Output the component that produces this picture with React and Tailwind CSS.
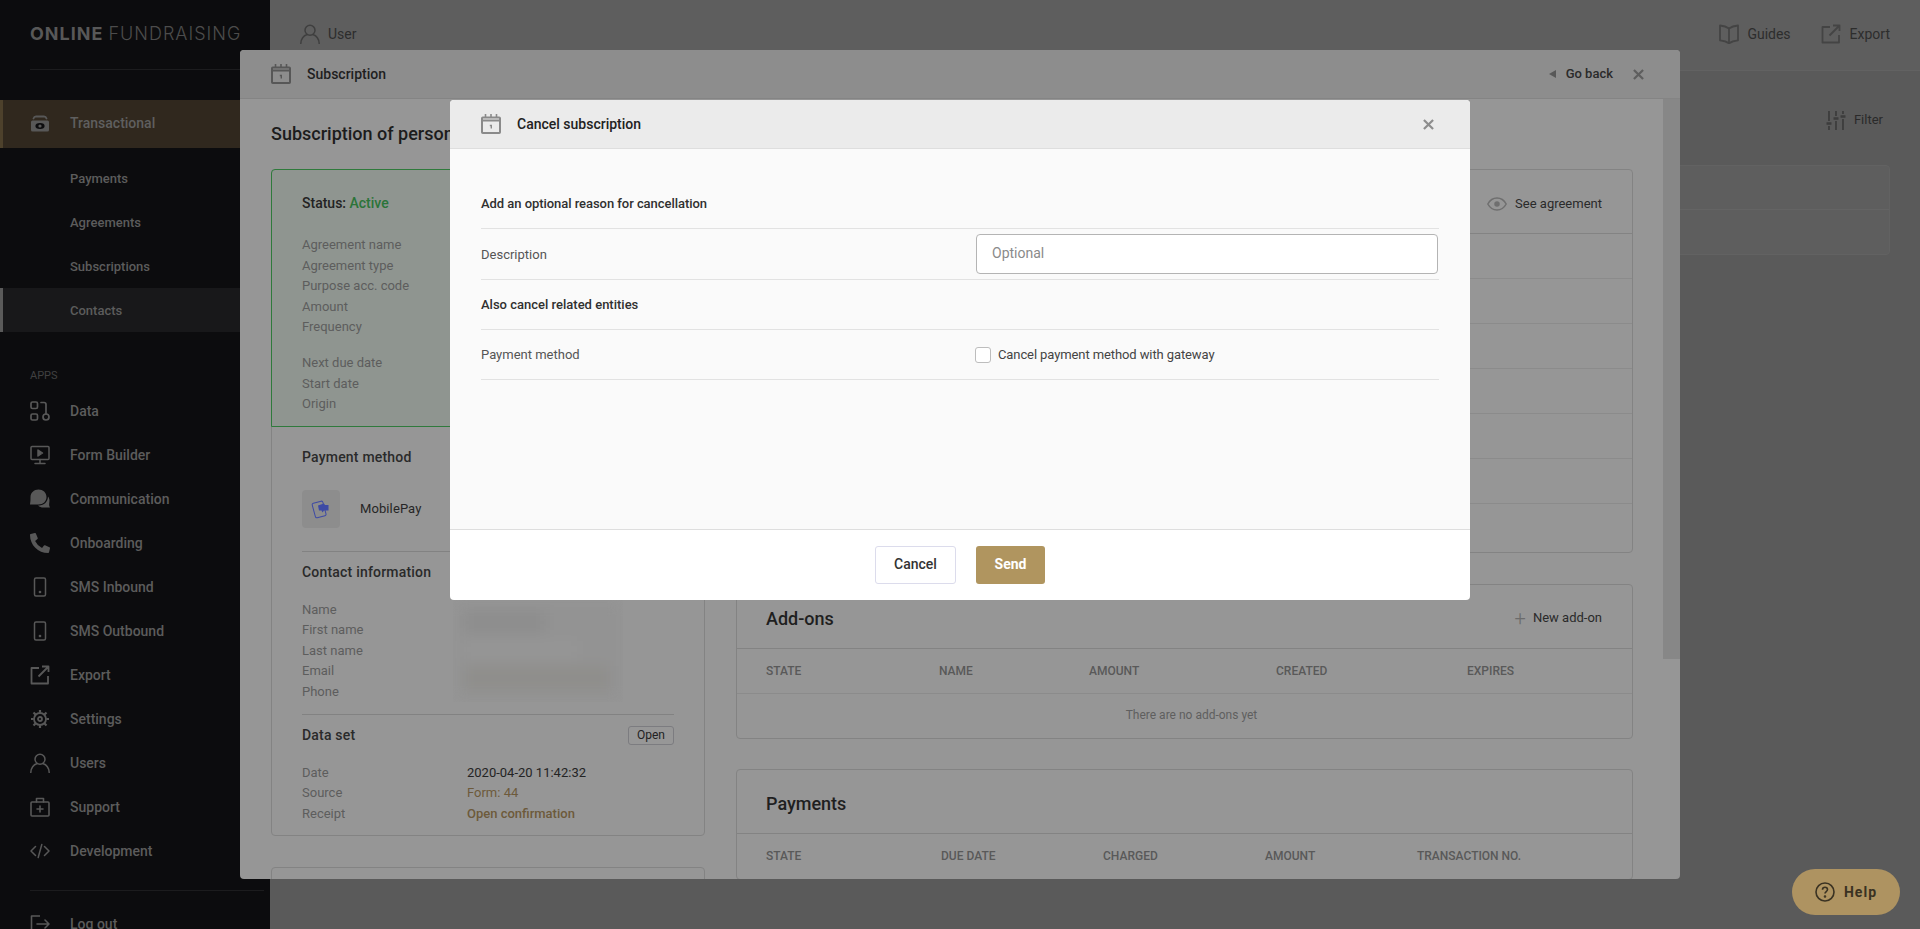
import React from "react";
import { FaPhoneAlt } from "react-icons/fa";

const I = ({ children, c = "", sw = 1.8, box = "0 0 20 20" }) => (
  <svg viewBox={box} fill="none" stroke="currentColor" strokeWidth={sw} strokeLinecap="round" strokeLinejoin="round" className={"shrink-0 " + c}>{children}</svg>
);

const Calendar = ({ c }) => (
  <svg viewBox="0 0 20 20" className={"shrink-0 " + c} fill="none" stroke="currentColor">
    <rect x="1" y="3.500" width="18" height="15.500" rx="0.800" strokeWidth="2" />
    <path d="M1 6.500h18" strokeWidth="2" />
    <path d="M4.500 0v3M10 0v3M15.500 0v3" strokeWidth="1.600" />
    <path d="M8.800 11.500h1.500v3" strokeWidth="1.400" />
  </svg>
);
const X = ({ c }) => (
  <I c={c} sw={2.4} box="0 0 12 12"><path d="M1 1l10 10M11 1L1 11" strokeLinecap="butt" /></I>
);
const Cash = ({ c }) => (
  <I c={c} sw={1.800}>
    <path d="M3.500 4.500C4 2.800 5 2.500 6 2.500h8c1 0 2 .3 2.500 2" />
    <rect x="1" y="6.500" width="18" height="11" rx="1.500" fill="currentColor" stroke="none" />
    <ellipse cx="10" cy="12" rx="4.600" ry="3" fill="#0c0c0e" stroke="none" />
    <circle cx="10" cy="12" r="1.600" fill="currentColor" stroke="none" />
  </I>
);
const Data = ({ c }) => (
  <I c={c} sw={1.700}>
    <rect x="1" y="1" width="6.500" height="6.500" rx="1.500" />
    <rect x="1" y="13" width="6.500" height="6" rx="1.500" />
    <circle cx="16" cy="16" r="3" />
    <path d="M11 1.500h3c1.300 0 2 .8 2 2V13" />
  </I>
);
const FormB = ({ c }) => (
  <I c={c} sw={1.500}>
    <rect x="1" y="1.500" width="18" height="13" rx="1" />
    <path d="M8 5l4.500 3-4.500 3z" fill="currentColor" />
    <path d="M10 14.500v4M5 18.500h10" />
  </I>
);
const Chat = ({ c }) => (
  <svg viewBox="0 0 20 20" className={"shrink-0 " + c} fill="currentColor">
    <path d="M8.500 .5C4 .5.5 3.700.5 8c0 2.600 0 5-.5 7.500h8.500c4.700 0 8-3 8-7.500S13 .5 8.500 .5z" />
    <path d="M18 7.500c0 5-4 9-9 9H8c1.500 1.500 3.500 2 5 2h7c-1-1.500-1-3-.7-5 .5-2.500 0-4.500-1.300-6z" />
  </svg>
);
const Mobile = ({ c }) => (
  <I c={c} sw={1.500}>
    <rect x="4.500" y="1" width="11" height="18" rx="1.500" />
    <circle cx="10" cy="15" r=".6" fill="currentColor" />
  </I>
);
const ExportI = ({ c }) => (
  <I c={c} sw={1.800}>
    <path d="M9 3H1.500v15.500H18V11" strokeLinecap="butt" />
    <path d="M8.500 11.500L18 2M12 1.500h6.500V7" strokeLinecap="butt" />
  </I>
);
const Gear = ({ c }) => (
  <I c={c} sw={1.800}>
    <circle cx="10" cy="10" r="2" />
    <circle cx="10" cy="10" r="6" />
    <path d="M10 1v2.500M10 16.500V19M1 10h2.500M16.500 10H19M3.500 3.500l2 2M14.500 14.500l2 2M16.500 3.500l-2 2M5.500 14.500l-2 2" strokeWidth="2.200" strokeLinecap="butt" />
  </I>
);
const UserI = ({ c }) => (
  <I c={c} sw={1.500}>
    <circle cx="10" cy="6.200" r="5" />
    <path d="M.8 19.500c0-4.500 3-8 5.900-8.700M19.200 19.500c0-4.500-3-8-5.900-8.700" />
  </I>
);
const Support = ({ c }) => (
  <I c={c} sw={1.600}>
    <rect x="1" y="5" width="18" height="14" rx="1" />
    <path d="M6.500 5V1.500h7V5M10 9v6M7 12h6" />
  </I>
);
const Dev = ({ c }) => (
  <I c={c} sw={1.500}>
    <path d="M5.500 5.500L1 10l4.500 4.500M14.500 5.500L19 10l-4.500 4.500M11.800 3.500L8.200 16.500" />
  </I>
);
const Logout = ({ c }) => (
  <I c={c} sw={1.600}>
    <path d="M10 2H1.500v16H10" strokeLinecap="butt" />
    <path d="M7 10h12M15 6l4 4-4 4" />
  </I>
);
const Book = ({ c }) => (
  <I c={c} sw={1.800}>
    <path d="M10 4.500C8 3 4.500 1.800 1 1.500v14.800c3.500.3 7 1.500 9 3.200 2-1.700 5.500-2.900 9-3.200V1.500c-3.500.3-7 1.500-9 3z" />
    <path d="M10 4.500v15" />
  </I>
);
const Sliders = ({ c }) => (
  <I c={c} sw={1.800}>
    <path d="M3 1v10M3 16v4M10 1v5M10 11v9M17 1v3M17 9v11" strokeLinecap="butt" />
    <path d="M.5 13.500h5M7.500 8.500h5M14.500 6.500h5" strokeLinecap="butt" strokeWidth="2.500" />
  </I>
);
const Eye = ({ c }) => (
  <I c={c} sw={1.500} box="0 0 20 14">
    <path d="M.8 7C3 3 6.300 1 10 1s7 2 9.200 6c-2.200 4-5.500 6-9.200 6S3 11 .8 7z" />
    <circle cx="10" cy="7" r="2" fill="currentColor" />
  </I>
);

const NavIcon = ({ children }) => <span className="w-5 h-5 flex items-center justify-center text-[#585858]">{children}</span>;

const apps = [
  ["Data", <Data c="w-5 h-5" />],
  ["Form Builder", <FormB c="w-5 h-5" />],
  ["Communication", <Chat c="w-5 h-5" />],
  ["Onboarding", <FaPhoneAlt className="w-5 h-5" />],
  ["SMS Inbound", <Mobile c="w-5 h-5" />],
  ["SMS Outbound", <Mobile c="w-5 h-5" />],
  ["Export", <ExportI c="w-5 h-5" />],
  ["Settings", <Gear c="w-5 h-5" />],
  ["Users", <UserI c="w-5 h-5" />],
  ["Support", <Support c="w-5 h-5" />],
  ["Development", <Dev c="w-5 h-5" />],
];

function Sidebar() {
  return (
    <aside className="w-[270px] h-[929px] shrink-0 bg-[#0c0c0e] overflow-hidden">
      <div className="h-[70px] ml-[30px] border-b border-[#1c1c1e] flex items-center pb-[2px] font-['Inter',sans-serif] text-[18px] tracking-[1px] whitespace-nowrap">
        <span className="font-bold text-[#585858]">ONLINE</span>
        <span className="font-light text-[#4c4c4c] ml-[5px]">FUNDRAISING</span>
      </div>
      <div className="mt-[30px] h-[48px] bg-[#30281e] border-l-[3px] border-[#4d412c] pl-[27px] flex items-center gap-5">
        <NavIcon><Cash c="w-5 h-5" /></NavIcon>
        <span className="text-[14px] font-medium text-[#5f5f5f] pb-[2px]">Transactional</span>
      </div>
      <div className="mt-2 text-[13px] font-medium text-[#5c5c5c]">
        {["Payments", "Agreements", "Subscriptions"].map((t) => (
          <div key={t} className="h-[44px] pl-[70px] pt-[2px] flex items-center">{t}</div>
        ))}
        <div className="h-[44px] pl-[67px] pt-[2px] flex items-center bg-[#18181a] border-l-[3px] border-[#5a5a5a]">Contacts</div>
      </div>
      <div className="h-[57px] pl-[30px] pt-[37px] text-[11px] leading-[14px] text-[#414141]">APPS</div>
      {apps.map(([t, ic]) => (
        <div key={t} className="h-[44px] pl-[30px] flex items-center gap-5 text-[14px] font-medium text-[#5c5c5c]">
          <NavIcon>{ic}</NavIcon>
          <span>{t}</span>
        </div>
      ))}
      <div className="ml-[30px] mr-[6px] mt-[17px] border-t border-[#1c1c1e]" />
      <div className="mt-[11px] h-[44px] pl-[30px] flex items-center gap-5 text-[14px] font-medium text-[#5c5c5c]">
        <NavIcon><Logout c="w-5 h-5" /></NavIcon>
        <span>Log out</span>
      </div>
    </aside>
  );
}

function Main() {
  return (
    <main className="flex-1 min-w-0 bg-[#5a5a5a]">
      <header className="h-[71px] bg-[#5e5e5e] border-b border-[#626262] pl-[30px] pr-[30px] flex items-center justify-between text-[14px] text-[#2d2d2d] pb-[2px]">
        <div className="flex items-center gap-2">
          <UserI c="w-5 h-5 text-[#3f3f3f]" />
          <span>User</span>
        </div>
        <div className="flex items-center">
          <Book c="w-5 h-5 text-[#444]" />
          <span className="ml-2">Guides</span>
          <ExportI c="w-5 h-5 ml-[30px] text-[#444]" />
          <span className="ml-[9px]">Export</span>
        </div>
      </header>
      <div className="flex justify-end pr-[37px] pt-[39px] items-center text-[13px] text-[#2a2a2a]">
        <Sliders c="w-5 h-5 text-[#3d3d3d]" />
        <span className="ml-2">Filter</span>
      </div>
      <div className="ml-[30px] mr-[30px] mt-[35px] h-[90px] rounded border border-[#626262] bg-[#5e5e5e]">
        <div className="h-[44px] border-b border-[#646464]" />
      </div>
    </main>
  );
}

const Row = ({ k, v, vc = "" }) => (
  <div className="flex h-[20.4px] leading-[20.4px]">
    <span className="w-[165px] shrink-0 text-[#5d5d5d]">{k}</span>
    {v && <span className={vc}>{v}</span>}
  </div>
);

function LeftColumn() {
  return (
    <div className="w-[434px] shrink-0">
      <div className="rounded border border-[#838383] text-[13px]">
        <div className="h-[258px] -mt-px -mx-px rounded-t border border-[#2f7a3c] bg-[#8f9590] pl-[30px] pt-[23px]">
          <div className="leading-[20.4px] text-[14px] font-medium text-[#232323] mb-[22px]">
            Status: <span className="text-[#2b7439]">Active</span>
          </div>
          {["Agreement name", "Agreement type", "Purpose acc. code", "Amount", "Frequency"].map((k) => <Row key={k} k={k} />)}
          <div className="h-[16px]" />
          {["Next due date", "Start date", "Origin"].map((k) => <Row key={k} k={k} />)}
        </div>
        <div className="px-[30px] pt-[20px]">
          <div className="text-[14px] leading-[20px] font-medium tracking-[0.2px] text-[#2a2a2a]">Payment method</div>
          <div className="mt-[23px] flex items-center pb-[23px] border-b border-[#828282]">
            <div className="w-[38px] h-[38px] rounded bg-[#8d8d8d] flex items-center justify-center">
              <svg viewBox="0 0 20 20" className="w-[20px] h-[20px]">
                <rect x="2.500" y="3" width="11" height="15" rx="1.500" fill="none" stroke="#3d4aa5" strokeWidth="1" transform="rotate(-15 8 10)" />
                <path d="M7 6.500l6-2 1 1.500h3.500v5.500H13l-1.500 2-1-2H8z" fill="#3d4aa5" />
              </svg>
            </div>
            <span className="ml-[20px] text-[#262626] tracking-[0.1px]">MobilePay</span>
          </div>
          <div className="pt-[10px] text-[14px] leading-[20px] font-medium tracking-[0.2px] text-[#2a2a2a]">Contact information</div>
          <div className="mt-[18px] flex pb-[12px] border-b border-[#828282]">
            <div className="w-[151px] shrink-0">
              {["Name", "First name", "Last name", "Email", "Phone"].map((k) => <Row key={k} k={k} />)}
            </div>
            <div className="w-[170px] h-[102px] overflow-hidden">
              <div className="h-full w-full blur-[7px] bg-[#939393] flex flex-col gap-2 p-3">
                <div className="h-6 w-20 bg-[#8d8d8d]" />
                <div className="h-5 w-28 bg-[#969696]" />
                <div className="h-7 w-36 bg-[#8f8e8b]" />
              </div>
            </div>
          </div>
          <div className="pt-[10px] flex items-center justify-between h-[30px]">
            <span className="text-[14px] leading-[20px] font-medium tracking-[0.2px] text-[#2a2a2a]">Data set</span>
            <button className="h-[19px] w-[46px] rounded-[3px] border border-[#7c7c80] bg-[#979797] text-[12px] leading-none text-[#222]">Open</button>
          </div>
          <div className="mt-[18px] pb-[11px]">
            <Row k="Date" v="2020-04-20 11:42:32" vc="text-[#242424]" />
            <Row k="Source" v="Form: 44" vc="text-[#6d5a3b]" />
            <Row k="Receipt" v="Open confirmation" vc="font-medium text-[#6d5a3b]" />
          </div>
        </div>
      </div>
      <div className="mt-[31px] h-[60px] rounded border border-[#838383]" />
    </div>
  );
}

const Th = ({ children, w }) => <div className={w}>{children}</div>;

function RightColumn() {
  return (
    <div className="w-[897px] shrink-0">
      <div className="rounded border border-[#838383]">
        <div className="h-[64px] pr-[30px] pt-[4px] flex items-center justify-end text-[13px] text-[#2a2a2a] border-b border-[#838383]">
          <Eye c="w-5 h-[14px] text-[#6f6f6f]" />
          <span className="ml-2">See agreement</span>
        </div>
        {[0, 1, 2, 3, 4, 5].map((i) => <div key={i} className="h-[45px] border-b border-[#8b8b8b]" />)}
        <div className="h-[48px]" />
      </div>
      <div className="mt-[31px] rounded border border-[#838383]">
        <div className="h-[64px] pl-[29px] pr-[30px] pt-[3px] flex items-center justify-between border-b border-[#838383]">
          <span className="text-[18px] font-medium text-[#1f1f1f]">Add-ons</span>
          <span className="flex items-center text-[13px] text-[#2a2a2a]">
            <span className="text-[#6b6b6b] text-[20px] leading-none font-light mr-[7px]">+</span>New add-on
          </span>
        </div>
        <div className="h-[45px] pl-[29px] flex items-center border-b border-[#8b8b8b] text-[12px] font-medium uppercase text-[#595959]">
          <Th w="w-[173px]">State</Th><Th w="w-[150px]">Name</Th><Th w="w-[187px]">Amount</Th><Th w="w-[191px]">Created</Th><Th>Expires</Th>
        </div>
        <div className="h-[44px] pl-[14px] pb-[2px] flex items-center justify-center text-[12px] text-[#5f5f5f]">There are no add-ons yet</div>
      </div>
      <div className="mt-[30px] rounded border border-[#838383]">
        <div className="h-[64px] pl-[29px] pt-[3px] flex items-center border-b border-[#838383]">
          <span className="text-[18px] font-medium text-[#1f1f1f]">Payments</span>
        </div>
        <div className="h-[45px] pl-[29px] pb-[2px] flex items-center text-[12px] font-medium uppercase text-[#595959]">
          <Th w="w-[175px]">State</Th><Th w="w-[162px]">Due date</Th><Th w="w-[162px]">Charged</Th><Th w="w-[152px]">Amount</Th><Th>Transaction no.</Th>
        </div>
      </div>
    </div>
  );
}

function SubscriptionPanel() {
  return (
    <section className="absolute left-[240px] top-[50px] w-[1440px] h-[829px] rounded-[4px] bg-[#969696] overflow-hidden flex flex-col">
      <div className="h-[49px] shrink-0 bg-[#8d8d8d] border-b border-[#848484] pl-[31px] pr-[30px] flex items-center text-[14px] text-[#1f1f1f]">
        <Calendar c="w-5 h-5 text-[#575757]" />
        <span className="ml-4 font-medium">Subscription</span>
        <span className="ml-auto mr-[10px] w-0 h-0 border-y-[4px] border-y-transparent border-r-[7px] border-r-[#585858]" />
        <span className="text-[13px] font-medium text-[#2a2a2a]">Go back</span>
        <X c="w-[11px] h-[11px] ml-[20px] mr-[6px] text-[#5e5e5e]" />
      </div>
      <div className="flex-1 min-h-0 flex">
        <div className="flex-1 min-w-0 overflow-hidden pl-[31px]">
          <h1 className="h-[70px] pt-[20px] text-[18px] leading-[30px] font-medium text-[#1c1c1c] whitespace-nowrap">Subscription of person</h1>
          <div className="flex gap-[31px]">
            <LeftColumn />
            <RightColumn />
          </div>
        </div>
        <div className="w-[17px] shrink-0">
          <div className="h-[560px] bg-[#878787]" />
        </div>
      </div>
    </section>
  );
}

function CancelModal() {
  return (
    <section className="absolute left-[450px] top-[100px] w-[1020px] h-[500px] rounded-[4px] bg-white overflow-hidden flex flex-col text-[13px]">
      <div className="h-[49px] shrink-0 bg-[#ebebeb] border-b border-[#dedede] pl-[31px] pr-[36px] flex items-center text-[#222]">
        <Calendar c="w-5 h-5 text-[#8a8a8a]" />
        <span className="ml-4 text-[14px] font-medium">Cancel subscription</span>
        <X c="w-[11px] h-[11px] ml-auto text-[#8d8d8d]" />
      </div>
      <div className="flex-1 min-h-0 bg-[#fafafa] px-[31px]">
        <div className="h-[80px] pt-[45px] leading-[20px] font-medium tracking-[-0.05px] text-[#303030] border-b border-[#e2e2e2]">Add an optional reason for cancellation</div>
        <div className="h-[51px] flex items-center border-b border-[#e2e2e2] text-[#555]">
          <span className="w-[495px] shrink-0 pt-[1px]">Description</span>
          <input readOnly placeholder="Optional" className="w-[462px] h-[40px] rounded-[4px] border border-[#b4b4b4] bg-white pl-[15px] pb-[2px] text-[14px] placeholder:text-[#8a8a8a] outline-none" />
        </div>
        <div className="h-[50px] flex items-center font-medium text-[#303030] border-b border-[#e2e2e2]">Also cancel related entities</div>
        <div className="h-[50px] flex items-center border-b border-[#e2e2e2] text-[#555]">
          <span className="w-[494px] shrink-0">Payment method</span>
          <span className="w-4 h-4 rounded-[3px] border border-[#bdbdbd] bg-white" />
          <span className="ml-[7px] text-[#444] tracking-[-0.1px]">Cancel payment method with gateway</span>
        </div>
      </div>
      <div className="h-[71px] shrink-0 border-t border-[#dedede] flex items-center justify-center gap-5 text-[14px]">
        <button className="w-[81px] h-[38px] rounded-[3px] border border-[#dcdcec] bg-white font-medium text-[#333] pb-[1px]">Cancel</button>
        <button className="w-[69px] h-[38px] rounded-[3px] bg-[#b0955f] font-bold text-white pb-[1px]">Send</button>
      </div>
    </section>
  );
}

export default function App() {
  return (
    <div className="relative w-full h-[929px] overflow-hidden flex font-['Roboto',sans-serif]">
      <Sidebar />
      <Main />
      <SubscriptionPanel />
      <CancelModal />
      <button className="absolute left-[1792px] top-[869px] w-[108px] h-[46px] rounded-full bg-[#ae9361] flex items-center justify-center gap-[9px] text-[14px] font-bold tracking-[1px] text-[#3a3222]">
        <svg viewBox="0 0 20 20" className="w-5 h-5" fill="none" stroke="currentColor" strokeWidth="1.600">
          <circle cx="10" cy="10" r="9" />
          <path d="M7.500 7.800c0-1.500 1.100-2.500 2.500-2.500s2.500 1 2.500 2.300c0 2-2.500 2-2.500 4" />
          <circle cx="10" cy="14.500" r=".5" fill="currentColor" />
        </svg>
        Help
      </button>
    </div>
  );
}
